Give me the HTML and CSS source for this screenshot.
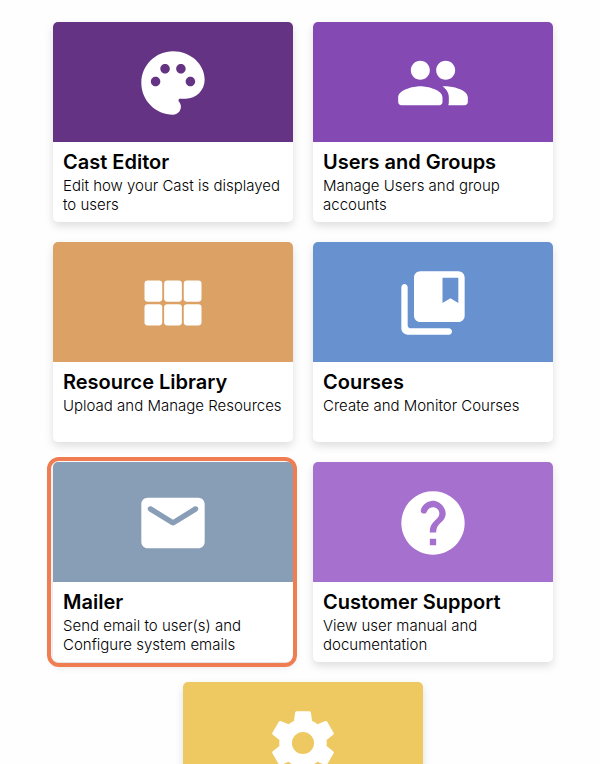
FILE: index.html
```html
<!DOCTYPE html>
<html lang="en">
<head>
<meta charset="utf-8">
<meta name="viewport" content="width=device-width, initial-scale=1">
<title>Dashboard</title>
<link rel="stylesheet" href="styles.css">
</head>
<body>
<main class="tiles">
  <a class="tile" href="#">
    <span class="banner banner-cast">
      <svg class="icon" viewBox="0 0 24 24" aria-hidden="true"><path d="M12 2C6.49 2 2 6.49 2 12s4.49 10 10 10c1.38 0 2.5-1.12 2.5-2.5 0-.61-.23-1.2-.64-1.67-.08-.1-.13-.21-.13-.33 0-.28.22-.5.5-.5H16c3.31 0 6-2.69 6-6 0-4.96-4.49-9-10-9zm5.5 11c-.83 0-1.5-.67-1.5-1.5s.67-1.5 1.5-1.5 1.5.67 1.5 1.5-.67 1.5-1.5 1.5zm-3-4c-.83 0-1.5-.67-1.5-1.5S13.67 6 14.5 6s1.5.67 1.5 1.5S15.33 9 14.5 9zM5 11.5c0-.83.67-1.5 1.5-1.5s1.5.67 1.5 1.5S7.33 13 6.5 13 5 12.33 5 11.5zm6-4c0 .83-.67 1.5-1.5 1.5S8 8.33 8 7.5 8.67 6 9.5 6s1.5.67 1.5 1.5z"/></svg>
    </span>
    <span class="content">
      <strong class="title">Cast Editor</strong>
      <span class="text">Edit how your Cast is displayed to users</span>
    </span>
  </a>
  <a class="tile" href="#">
    <span class="banner banner-users">
      <svg class="icon" viewBox="0 0 24 24" aria-hidden="true"><path d="M16 11c1.66 0 3-1.34 3-3s-1.34-3-3-3-3 1.34-3 3 1.34 3 3 3zm-8 0c1.66 0 3-1.34 3-3S9.66 5 8 5 5 6.34 5 8s1.34 3 3 3zm0 2c-2.33 0-7 1.17-7 3.5V18c0 .55.45 1 1 1h12c.55 0 1-.45 1-1v-1.5c0-2.33-4.67-3.5-7-3.5zm8 0c-.29 0-.62.02-.97.05.02.01.03.03.04.04 1.14.83 1.93 1.94 1.93 3.41V18c0 .35-.07.69-.18 1H22c.55 0 1-.45 1-1v-1.5c0-2.33-4.67-3.5-7-3.5z"/></svg>
    </span>
    <span class="content">
      <strong class="title">Users and Groups</strong>
      <span class="text">Manage Users and group accounts</span>
    </span>
  </a>
  <a class="tile" href="#">
    <span class="banner banner-library">
      <svg class="icon" viewBox="0 0 24 24" aria-hidden="true">
        <rect x="3" y="4.900" width="5.600" height="6.700" rx="1"/>
        <rect x="9.200" y="4.900" width="5.600" height="6.700" rx="1"/>
        <rect x="15.400" y="4.900" width="5.600" height="6.700" rx="1"/>
        <rect x="3" y="12.400" width="5.600" height="6.700" rx="1"/>
        <rect x="9.200" y="12.400" width="5.600" height="6.700" rx="1"/>
        <rect x="15.400" y="12.400" width="5.600" height="6.700" rx="1"/>
      </svg>
    </span>
    <span class="content">
      <strong class="title">Resource Library</strong>
      <span class="text">Upload and Manage Resources</span>
    </span>
  </a>
  <a class="tile" href="#">
    <span class="banner banner-courses">
      <svg class="icon" viewBox="0 0 24 24" aria-hidden="true"><path d="M3 6c-.55 0-1 .45-1 1v13c0 1.1.9 2 2 2h13c.55 0 1-.45 1-1s-.45-1-1-1H5c-.55 0-1-.45-1-1V7c0-.55-.45-1-1-1zM20 2H8c-1.1 0-2 .9-2 2v12c0 1.1.9 2 2 2h12c1.1 0 2-.9 2-2V4c0-1.1-.9-2-2-2zm0 10l-2.5-1.5L15 12V4h5v8z"/></svg>
    </span>
    <span class="content">
      <strong class="title">Courses</strong>
      <span class="text">Create and Monitor Courses</span>
    </span>
  </a>
  <a class="tile tile-selected" href="#">
    <span class="banner banner-mailer">
      <svg class="icon" viewBox="0 0 24 24" aria-hidden="true"><path d="M20 4H4c-1.1 0-2 .9-2 2v12c0 1.1.9 2 2 2h16c1.1 0 2-.9 2-2V6c0-1.1-.9-2-2-2zm-.4 4.25L12.53 12.67c-.32.2-.74.2-1.06 0L4.4 8.25c-.25-.16-.4-.43-.4-.72 0-.67.73-1.07 1.3-.72L12 11l6.7-4.19c.57-.35 1.3.05 1.3.72 0 .29-.15.56-.4.72z"/></svg>
    </span>
    <span class="content">
      <strong class="title">Mailer</strong>
      <span class="text">Send email to user(s) and Configure system emails</span>
    </span>
  </a>
  <a class="tile" href="#">
    <span class="banner banner-support">
      <svg class="icon" viewBox="0 0 24 24" aria-hidden="true"><path d="M12 2C6.48 2 2 6.48 2 12s4.48 10 10 10 10-4.48 10-10S17.52 2 12 2zm1 17h-2v-2h2v2zm2.07-7.75l-.9.92c-.5.51-.86.97-1.04 1.69-.08.32-.13.68-.13 1.14h-2v-.5c0-.46.08-.9.22-1.31.2-.58.53-1.1.95-1.52l1.24-1.26c.46-.44.68-1.1.55-1.8-.13-.72-.69-1.33-1.39-1.53-1.11-.31-2.14.32-2.47 1.27-.12.37-.43.65-.82.65h-.3C8.4 9 8 8.44 8.16 7.88c.43-1.47 1.68-2.59 3.23-2.83 1.52-.24 2.97.55 3.87 1.8 1.18 1.63.83 3.38-.19 4.4z"/></svg>
    </span>
    <span class="content">
      <strong class="title">Customer Support</strong>
      <span class="text">View user manual and documentation</span>
    </span>
  </a>
  <a class="tile" href="#">
    <span class="banner banner-settings">
      <svg class="icon" viewBox="0 0 24 24" aria-hidden="true"><path d="M19.43 12.98c.04-.32.07-.64.07-.98s-.03-.66-.07-.98l2.11-1.65c.19-.15.24-.42.12-.64l-2-3.46c-.12-.22-.39-.3-.61-.22l-2.49 1c-.52-.4-1.08-.73-1.69-.98l-.38-2.65C14.46 2.18 14.25 2 14 2h-4c-.25 0-.46.18-.49.42l-.38 2.65c-.61.25-1.17.59-1.69.98l-2.49-1c-.23-.09-.49 0-.61.22l-2 3.46c-.13.22-.07.49.12.64l2.11 1.65c-.04.32-.07.65-.07.98s.03.66.07.98l-2.11 1.65c-.19.15-.24.42-.12.64l2 3.46c.12.22.39.3.61.22l2.49-1c.52.4 1.08.73 1.69.98l.38 2.65c.03.24.24.42.49.42h4c.25 0 .46-.18.49-.42l.38-2.65c.61-.25 1.17-.59 1.69-.98l2.49 1c.23.09.49 0 .61-.22l2-3.46c.12-.22.07-.49-.12-.64l-2.11-1.65zM12 15.5c-1.93 0-3.5-1.57-3.5-3.5s1.57-3.5 3.5-3.5 3.5 1.57 3.5 3.5-1.57 3.5-3.5 3.5z"/></svg>
    </span>
  </a>
</main>
</body>
</html>
```
FILE: styles.css
```css
* {
  box-sizing: border-box;
}

body {
  margin: 0;
  height: 100vh;
  overflow: hidden;
  background: #fefefe;
  color: #000;
  font-family: Inter, "Liberation Sans", sans-serif;
}

.tiles {
  display: flex;
  flex-wrap: wrap;
  justify-content: center;
  gap: 20px;
  padding: 22px 14px 22px 20px;
}

.tile {
  position: relative;
  display: flex;
  flex-direction: column;
  width: 240px;
  min-height: 200px;
  border-radius: 5px;
  background: #fff;
  box-shadow: 0 4px 8px rgba(0, 0, 0, 0.13);
  color: inherit;
  text-decoration: none;
}

.tile-selected::after {
  content: "";
  position: absolute;
  inset: -5px -4px -5px -6px;
  border: 4px solid #f07d52;
  border-radius: 12px;
}

.banner {
  display: flex;
  align-items: center;
  justify-content: center;
  height: 120px;
  padding: 1px 1px 0 0;
  border-radius: 5px 5px 0 0;
}

.banner-cast { background: #653383; }
.banner-users { background: #8449b3; }
.banner-library { background: #dba165; }
.banner-courses { background: #6891d0; }
.banner-mailer { background: #889eb6; }
.banner-support { background: #a671ce; }
.banner-settings { background: #eec860; }

.icon {
  width: 76px;
  height: 76px;
  fill: #fff;
}

.content {
  display: flex;
  flex-direction: column;
  padding: 8px 10px;
}

.title {
  font-size: 20px;
  font-weight: 600;
  line-height: 24px;
}

.text {
  padding-top: 2px;
  font-size: 15px;
  font-weight: 300;
  line-height: 19px;
}
```
